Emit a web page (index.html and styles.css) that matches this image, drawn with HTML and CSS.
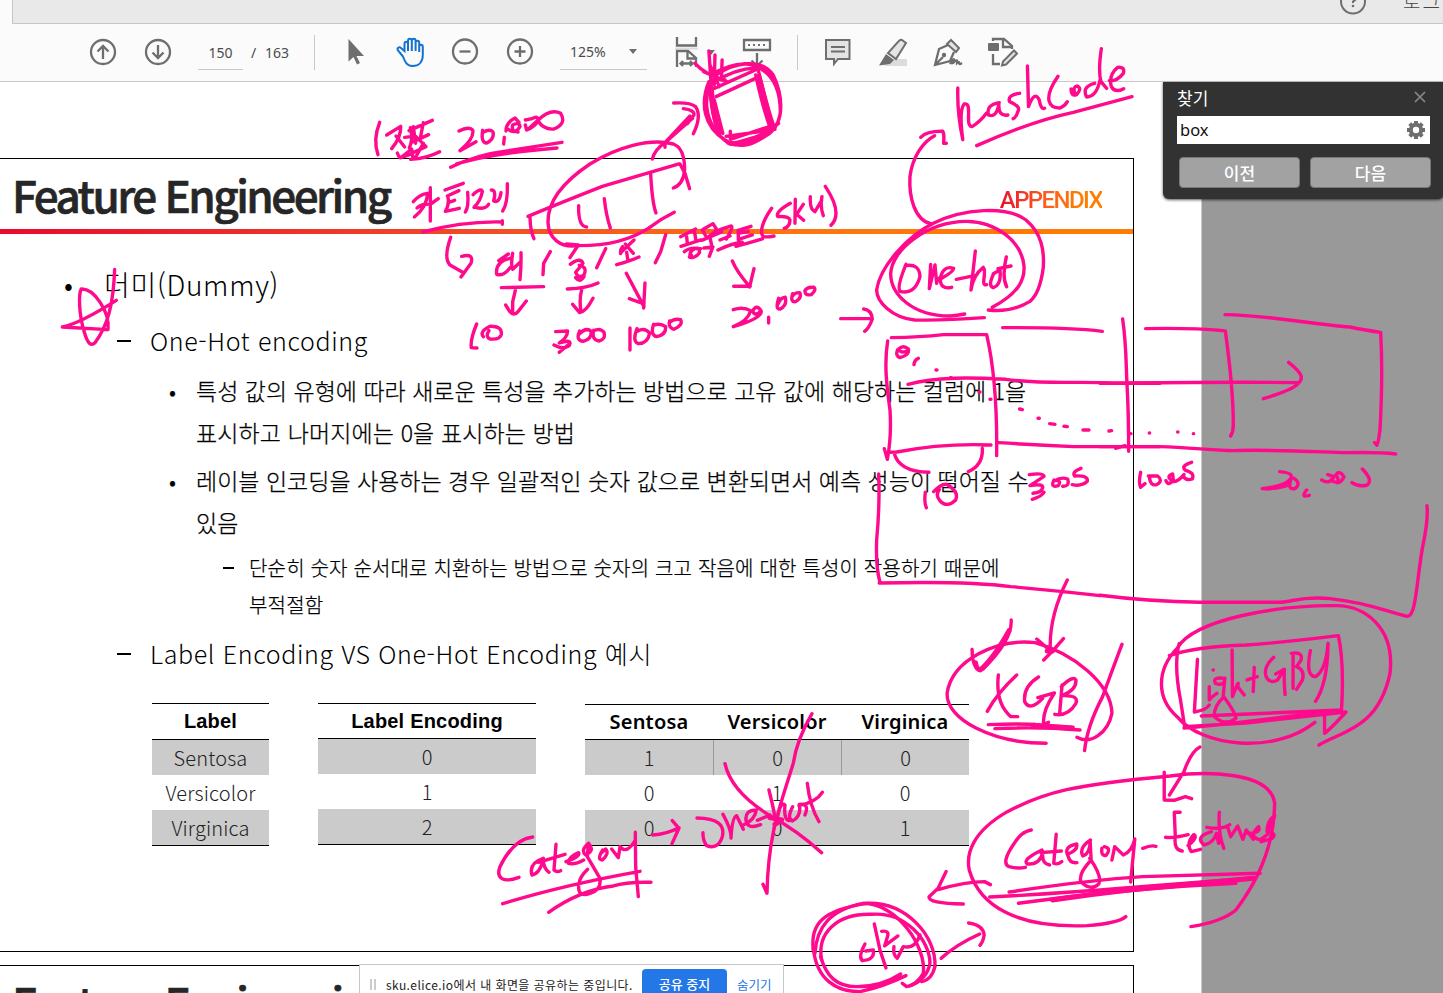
FILE: index.html
```html
<!DOCTYPE html>
<html lang="ko">
<head>
<meta charset="utf-8">
<title>Feature Engineering</title>
<link rel="stylesheet" href="styles.css">
</head>
<body>
<div class="app">
  <header class="tabs">
    <div class="tabband">
      <svg class="help" viewBox="1338 0 30 16"><circle cx="1353" cy="1.5" r="12"/><path d="M1349.5 -2q0-4 3.500-4t3.500 3.500q0 2-3.500 4v1.500"/><circle class="dot" cx="1353" cy="6" r="1.300"/></svg>
      <span class="login">로그인</span>
    </div>
  </header>
  <nav class="toolbar">
    <svg class="ic" viewBox="87 34 32 36"><circle cx="103" cy="52" r="12"/><path d="M103 59V46M97.500 51.500 103 46l5.500 5.500"/></svg>
    <svg class="ic" viewBox="142 34 32 36"><circle cx="158" cy="52" r="12"/><path d="M158 45v13M152.500 52.500 158 58l5.500-5.500"/></svg>
    <span class="field">150</span>
    <span class="slash">/</span>
    <span class="total">163</span>
    <i class="sep"></i>
    <svg class="ic" viewBox="340 34 32 36"><path class="fill" d="M348.500 39v22.500l5-4.500 3.500 7.500 3-1.500-3.500-7h7.500z"/></svg>
    <svg class="ic blue" viewBox="394 34 32 36"><path d="M403 56.500l-5-6c-1.500-2.500 1-4 3-2.500l3.500 3V44c0-3 3.500-3 3.500 0v7V41c0-3 3.800-3 3.800 0v10V41c0-3 3.800-3 3.800 0v10V43c0-3 3.600-3 3.600 0v9V47c0-3 3.600-3 3.600 0v8c0 7-4 11-10.300 11-5.500 0-7.500-4-9.500-9.500z"/></svg>
    <svg class="ic" viewBox="449 34 32 36"><circle cx="465" cy="51.500" r="12"/><path d="M459.500 51.500h11"/></svg>
    <svg class="ic" viewBox="504 34 32 36"><circle cx="520" cy="51.500" r="12"/><path d="M514.500 51.500h11M520 46v11"/></svg>
    <span class="field zoom">125%<b class="caret"></b></span>
    <svg class="ic wide" viewBox="670 34 48 36"><path class="band" d="M675 47.500h23v2h-23z"/><path d="M677 37v8.500h19V37M677 67V51h11l8 7v9M687.500 51v7.500h8M680.500 63.500h12M683 61l-2.500 2.500L683 66M690 61l2.500 2.500L690 66"/><path class="fill" d="M707 50h8l-4 5z"/></svg>
    <svg class="ic" viewBox="741 34 32 36"><path d="M744 40h26v10h-26zM757 53v13M751.500 60.500l5.500 5.500 5.500-5.500"/><path class="dots" d="M748 45h2M753 45h2M758 45h2M763 45h2"/></svg>
    <i class="sep"></i>
    <svg class="ic" viewBox="822 34 32 36"><path class="tint" d="M826 40h23.500v19H838l-4 5v-5h-8z"/><path class="thin" d="M831 47h14M831 51.500h14"/></svg>
    <svg class="ic" viewBox="877 34 32 36"><path class="band" d="M884 66l6-7h17v7z"/><path class="tint" d="M902 40l4 3-10 16-8-6 10-11q2-3 4-2z"/><path class="fill" d="M886 54l8 6-4 4-11 1.500z"/></svg>
    <svg class="ic" viewBox="932 34 32 36"><path class="tint" d="M951 40l8 8-3 4-9-8z"/><path d="M948 45l-9 4-4 16 15-4 4-9M935 65l8-8"/><circle class="fill" cx="944" cy="55" r="2.200"/><path d="M950 64q4-7 4-4t-1 3q4-4 4-2t0 2q2-2 2 0t3 0"/></svg>
    <svg class="ic last" viewBox="986 34 34 36"><rect class="fill" x="988" y="43" width="11" height="8" rx="1"/><path d="M993 41v-2h11l8 7v3M1003 39v8h8M993 54v10h7"/><path class="tint" d="M1014 50.500l3 3-11 11-4 1 1-4z"/></svg>
  </nav>

  <main class="viewer">
    <div class="sheet">
      <section class="page">
        <div class="titlebar"><h1>Feature Engineering</h1><span class="appendix">APPENDIX</span></div>
        <div class="rule"></div>
        <div class="content">
          <p class="l1"><i class="bul">•</i><span>더미(Dummy)</span></p>
          <p class="l2"><i class="dash"></i><span>One-Hot encoding</span></p>
          <p class="l3 first"><i class="bul">•</i><span>특성 값의 유형에 따라 새로운 특성을 추가하는 방법으로 고유 값에 해당하는 컬럼에 1을<br><span class="loose">표시하고 나머지에는 0을 표시하는 방법</span></span></p>
          <p class="l3"><i class="bul">•</i><span>레이블 인코딩을 사용하는 경우 일괄적인 숫자 값으로 변환되면서 예측 성능이 떨어질 수<br>있음</span></p>
          <p class="l4"><i class="dash"></i><span>단순히 숫자 순서대로 치환하는 방법으로 숫자의 크고 작음에 대한 특성이 작용하기 때문에<br>부적절함</span></p>
          <p class="l2 compare"><i class="dash"></i><span>Label Encoding VS One-Hot Encoding 예시</span></p>
          <div class="tables">
            <table class="t1"><tr><th>Label</th></tr><tr><td>Sentosa</td></tr><tr><td>Versicolor</td></tr><tr><td>Virginica</td></tr></table>
            <table class="t2"><tr><th>Label Encoding</th></tr><tr><td>0</td></tr><tr><td>1</td></tr><tr><td>2</td></tr></table>
            <table class="t3"><tr><th>Sentosa</th><th>Versicolor</th><th>Virginica</th></tr><tr class="split"><td>1</td><td>0</td><td>0</td></tr><tr><td>0</td><td>1</td><td>0</td></tr><tr><td>0</td><td>0</td><td>1</td></tr></table>
          </div>
        </div>
      </section>
      <section class="page next">
        <div class="titlebar"><h1>Feature Engineering</h1></div>
      </section>
    </div>
  </main>

  <aside class="find">
    <div class="findhead"><span>찾기</span><svg viewBox="0 0 12 12"><path d="M1 1l10 10M11 1 1 11"/></svg></div>
    <div class="findbox"><span>box</span><svg viewBox="-10 -10 20 20"><circle r="5.200"/><path d="M0-6V-9M0 6V9M-6 0H-9M6 0H9M-4.300-4.300l-2-2M4.300 4.300l2 2M-4.300 4.300l-2 2M4.300-4.300l2-2"/></svg></div>
    <div class="findbtns"><button>이전</button><button>다음</button></div>
  </aside>

  <div class="share"><i class="grip"></i><span class="msg">sku.elice.io에서 내 화면을 공유하는 중입니다.</span><button>공유 중지</button><a>숨기기</a></div>

  <svg class="ink" viewBox="0 0 1443 993" role="img" aria-label="1점포 20,000 카테고리 대/중/소/품목코드(SKU) hashCode one-hot XGB LightGBM category_features">
    <!-- store count -->
    <g transform="translate(370 90) scale(.3333)">
      <path d="M29 97Q8 150 24 194M50 135L92 109Q94 140 65 176M78 138L104 171M121 113Q130 150 118 174M104 142L122 140M82 189Q88 205 93 203L125 177 129 205M93 203L125 192M117 122L187 91M130 110L137 160M160 98L150 150M123 158L176 134M138 140L168 170 125 190M160 160L134 207M122 208Q170 205 209 185"/>
    </g>
    <!-- star -->
    <g transform="translate(0 240) scale(.3333)">
      <path d="M344 88C340 190 325 255 285 308Q267 325 254 280C235 220 236 160 244 147 C282 145 330 215 324 269L187 261Q240 250 349 181"/>
    </g>
    <!-- category levels -->
    <g transform="translate(400 90) scale(.3333)">
      <path d="M177 123Q205 108 218 120 224 145 180 182L228 155M248 121Q242 158 260 159 284 147 279 126 270 115 249 127M313 142L311 162M318 123Q318 98 345 84L357 97M325 118Q345 135 360 110 359 95 338 105 333 124 354 126M376 90L396 86Q415 75 414 92 405 110 380 120L376 105M385 117L412 92Q452 54 482 70 501 101 462 117 430 120 414 92"/>
      <path d="M152 232Q225 195 325 182L486 157M170 222Q270 190 471 174M250 197L400 174"/>
      <path d="M40 335Q60 312 83 310 81 350 43 381M51 354Q67 341 82 343M91 293V393M92 342L115 326M135 300L190 280M142 318L177 302M143 318Q150 340 136 364M144 338L164 331M136 364L178 355M203 307Q207 350 196 366M219 314Q244 291 247 305 241 335 222 352M226 352Q257 360 266 343M274 300Q290 300 281 333 298 340 303 308M322 281Q324 340 308 363M68 426Q190 393 307 396M307 392V403"/>
      <path d="M152 442C135 490 137 512 150 525L188 547M185 499Q223 489 213 520L183 561"/>
      <path d="M384 379Q460 347 607 289L837 222M840 222L855 250 869 296M390 382Q391 425 402 446M820 294Q850 283 854 240 854 174 820 162C750 143 650 172 570 222C472 287 443 344 444 397 446 445 480 474 533 467C640 468 700 444 745 415Q780 388 823 367M536 347C535 382 539 410 560 411M613 326Q618 375 631 414M752 251C755 310 761 350 768 369M757 207Q765 178 795 158L878 85M795 172V158L870 78M821 39Q870 36 887 50 906 80 880 131M850 56Q885 60 882 75L862 101"/>
      <path d="M330 505Q285 515 290 553 310 560 330 533M296 512L325 492M338 490Q332 526 338 538L362 515M363 488Q364 530 360 569M451 485L431 520 429 554M304 593L431 590M346 601L338 636V670M317 645L329 664Q342 680 354 665L379 633M499 462L535 465 510 503M511 523Q541 500 549 520 535 538 527 547 535 567 552 555 563 530 538 526M527 563Q540 580 552 560M502 597Q560 595 594 579M545 600Q537 628 543 665M518 643L539 668Q557 667 579 625M617 476L590 533M665 485L702 450M668 470Q660 480 662 491M676 462L700 490M680 487L684 512M650 524Q690 513 717 501M797 434L782 485 766 518M679 550Q700 590 732 650M735 579L731 654M688 626L732 642"/>
      <path d="M842 440L887 417M860 440L862 459M884 428L888 451M843 469Q875 459 903 450M853 485Q870 470 902 476M874 495Q860 505 881 502 908 490 894 475 874 475 870 493M910 418L939 401 951 420 921 444 907 420M905 451L965 426M930 442L937 475 928 499M912 474L939 471M960 419L994 408Q1001 412 979 447M960 450L990 438M954 480Q1000 459 1027 457M1014 421L1053 409M1015 422L1015 449M1018 429L1045 425M1016 448L1057 435M1008 469Q1052 458 1087 447M1115 355C1085 398 1078 430 1091 440Q1105 442 1122 438M1171 340Q1124 367 1134 380 1165 378 1170 390 1170 410 1153 415M1186 328L1185 400M1210 343L1190 373 1211 391M1231 320Q1229 359 1245 365L1265 331M1266 320Q1260 350 1270 377M1276 289C1310 340 1320 380 1293 406"/>
      <path d="M997 513Q1010 545 1046 586M1062 536L1049 591M1001 589H1051M1000 659Q1030 649 1052 662 1045 692 1000 710M1000 710Q1085 685 1084 664 1070 640 1058 663 1065 680 1080 665M1106 682V699M1136 625Q1125 659 1141 657 1162 645 1156 622 1141 623 1134 643M1178 611Q1170 638 1187 635 1207 622 1199 608 1184 607 1176 621M1216 600Q1212 618 1234 614 1250 600 1242 592 1220 590 1215 603"/>
      <path d="M230 702Q210 750 214 773L231 774M250 740Q237 725 270 709 307 708 304 733 300 750 270 747 255 740 267 722M467 725L503 723Q502 743 478 759 520 745 507 768 490 780 462 765M478 787L510 760M539 723Q526 752 550 754 575 748 574 724 557 710 535 735M581 721Q574 750 597 753 618 748 612 727 600 712 580 723M690 714V780M711 716Q696 755 715 761 743 760 749 730 735 711 712 724M761 703Q750 735 770 740 799 735 797 710 780 698 760 706M809 693Q804 713 822 718 850 705 842 689 822 684 808 698"/>
    </g>
    <!-- box with the heavy ring -->
    <g transform="translate(500 0) scale(.3571 .3333)">
      <path d="M546 190Q575 225 630 240M585 153L592 265M602 165L600 255M622 180L620 240M588 195L614 260M570 215L635 245M605 290L720 233M600 265L715 210M722 205Q750 330 770 388M716 225Q735 320 757 385M725 230L750 345M600 300L624 400M588 250Q590 350 615 400M645 394V418L765 376M633 409L760 390M655 430L750 400M735 403H750"/>
      <path d="M585 245C560 310 570 380 630 420C680 455 720 425 755 400C800 360 790 280 765 225C730 170 650 190 606 225C565 280 565 370 640 430Q690 445 720 418L780 370M590 225Q670 175 720 200C770 225 785 280 785 335M600 246Q660 206 715 204"/>
      <path class="heavy" d="M592 270Q597 350 612 392M725 230L757 365M645 430Q690 435 740 400"/>
    </g>
    <!-- hash code -->
    <g transform="translate(500 0) scale(.3571 .3333)">
      <path d="M1282 264Q1280 340 1296 419Q1285 330 1300 312C1325 305 1300 380 1322 380Q1345 365 1362 340M1398 308Q1360 315 1368 345 1390 355 1397 312 1395 350 1422 345M1455 280Q1420 285 1427 305 1460 320 1450 335 1445 353 1437 356M1477 198L1480 320Q1497 270 1510 300 1515 330 1525 325"/>
      <path d="M1208 672C1160 660 1145 590 1148 530 1155 470 1185 425 1217 407M1178 412Q1195 393 1240 394 1245 405 1242 430L1250 430"/>
    </g>
    <g transform="translate(1000 0) scale(.3333)">
      <path d="M174 229C125 300 150 325 180 324Q195 318 202 305M213 267Q213 290 230 284 247 266 232 258 218 260 224 278M284 250Q244 260 260 291 290 290 300 240M304 146Q294 215 303 245L320 265M328 242Q350 245 370 220 376 200 353 202 325 225 334 260 345 280 371 266M-70 437Q90 365 220 337L396 290"/>
    </g>
    <!-- one-hot bubble and column boxes -->
    <g transform="translate(820 220) scale(.3333)">
      <path d="M258 133Q230 200 240 214 285 225 300 170 299 130 256 137M332 133L328 206 345 135 350 190Q352 170 365 175 400 155 401 145 370 135 361 175 360 210 395 202M409 178L463 167M466 93L453 210Q460 165 490 142C502 155 480 200 500 194M521 161Q503 198 520 203 545 195 540 150L520 161M559 111Q545 170 560 200M534 146L573 138"/>
      <path d="M517 262C595 220 615 180 612 138 605 65 530 5 440 4C320 5 214 90 212 162C213 225 280 289 391 288Q410 287 434 282"/>
      <path d="M493 293Q370 302 284 300C215 293 170 245 170 210C180 140 260 50 340 10C430-35 560-43 618 0C665 40 673 90 670 142Q660 220 630 244 575 278 505 270"/>
      <path d="M62 296H154M131 267Q155 270 157 297 147 325 134 334M214 353Q300 352 370 344H500C520 430 532 540 530 707M203 363C192 430 200 500 210 570Q215 650 202 718L193 686M204 697L230 696Q370 669 513 675M536 668Q650 675 760 680H1020M222 697Q235 755 327 757M487 685Q490 735 445 755M548 323Q750 322 847 334M908 297C920 380 918 440 921 490 925 560 926 620 926 694M264 493C350 470 450 472 557 478 680 495 780 482 890 490H1020M233 389Q225 407 240 413 270 405 265 387 250 373 235 388 243 400 258 394M282 434Q283 420 295 415M887 685L915 677"/>
      <path d="M348 450h3M391 473h3M477 516h3M510 538h3M599 567l8 2M654 595h4M689 611l16 2M732 619l10 1M789 630l18 0M867 633l8-1M932 641h1M988 639h1M1073 636h1M1120 641h1"/>
      <path d="M176 762Q180 850 170 960C167 1040 175 1070 180 1087M316 817Q312 850 319 863M341 815Q365 790 380 793 418 815 407 840 382 865 360 843 345 825 358 809M628 764Q670 758 672 769L630 797Q670 790 668 803 665 818 639 820M637 838Q665 830 672 817M702 780Q690 805 715 797 726 780 704 782 724 770 743 777 750 800 728 799M783 745Q755 755 764 768 805 765 802 784 785 800 757 794M962 757Q955 790 962 802L975 791M988 768Q990 799 1010 794 1031 782 1013 768L985 768M1038 782Q1045 800 1060 780L1058 762Q1035 770 1060 785 1075 785 1092 764M1115 727Q1080 738 1097 751 1125 758 1117 777 1100 783 1090 770"/>
    </g>
    <g transform="translate(1100 290) scale(.3333)">
      <path d="M137 116Q270 113 370 122M376 123C388 210 400 330 400 405Q400 425 392 438M375 74C500 75 630 102 750 111Q790 120 842 127C848 230 844 350 840 420Q834 465 831 466L824 458M0 280C200 278 400 275 592 278M566 217C607 250 615 265 590 285 570 302 520 317 490 326M0 470H180C270 472 340 482 402 482 500 478 640 485 740 488Q840 486 887 492M539 545Q600 550 555 580 530 592 487 596 540 598 570 582M574 565Q560 600 585 596 605 580 582 565M620 600Q600 625 628 616M665 570Q690 585 702 560L683 554M692 570Q720 590 732 560 718 538 708 555 720 571 710 578M787 537Q820 570 802 585 775 592 756 578M981 647Q985 690 970 760C950 860 950 980 922 979 870 970 820 940 690 926 600 918 580 936 540 937H300Q150 935 0 916"/>
    </g>
    <!-- model names -->
    <g transform="translate(900 570) scale(.3463 .3333)">
      <path d="M-60 39Q200 33 320 50 450 62 578 77M483 30Q430 140 434 240M395 207L438 246M472 206Q445 240 415 270M321 150Q325 210 240 297 210 310 208 238M422 520C270 520 133 450 136 370 150 270 280 205 390 218 500 250 610 340 612 430 600 490 550 525 511 502M641 223Q620 280 585 380 540 470 533 542M284 315Q275 400 320 440H340M337 315Q280 370 252 424M400 321Q355 350 360 395 375 425 412 385M398 383L446 369Q410 425 415 463L429 457M468 345L461 430M466 350Q500 315 508 330 510 360 468 377 520 375 507 402 485 440 447 433M255 464Q360 460 400 465L500 472M274 476Q400 470 520 480"/>
      <path class="heavy" d="M218 278Q222 300 232 300 270 265 315 182M425 243H440M385 466L495 475"/>
      <path d="M1210 525C1270 485 1380 480 1415 310 1430 170 1340 108 1260 107 1100 105 850 145 800 235 740 300 740 385 800 440 870 530 1080 555 1198 457M778 257Q850 230 1000 225 1100 218 1266 197 1283 280 1275 420L870 438M806 221Q790 285 810 390L822 470 1000 459 1288 426Q1240 480 1226 490V430M820 474Q900 468 1275 420"/>
      <path d="M859 268L850 426Q885 420 893 405M904 300h1M893 350L893 390Q900 380 915 370M938 325Q900 320 911 340 937 350 938 325L933 383Q905 410 908 440 940 470 970 445 970 430 935 380M959 240L960 380Q982 320 975 350L994 375M1023 292L1020 365M1002 330L1032 320M1079 262C1035 300 1060 350 1090 330L1110 298 1085 312M1110 298Q1108 330 1112 374M1130 250Q1165 245 1158 270L1145 290Q1170 300 1162 330L1145 358M1135 250V355M1185 242Q1170 320 1200 320 1230 300 1236 220 1235 340 1200 394"/>
      <path d="M866 531Q840 545 820 605L778 675M763 607V690L792 691 824 680 842 686M840 1070Q930 1055 970 1020 1080 870 1082 700C1070 600 870 605 780 618 500 645 420 665 310 725 210 785 190 850 200 900 230 1010 340 1075 540 1067Q630 1060 652 1040M133 905L110 955 84 980Q80 1000 183 1002M110 959Q190 935 244 935L261 944M198 1059Q240 1065 243 1095 240 1115 231 1126M230 1092Q160 1125 119 1165"/>
      <path d="M379 780Q350 785 330 820 290 880 315 890 340 897 362 892M410 840Q350 870 368 882 405 885 413 845 407 880 432 885M451 793L444 880Q455 885 467 875M407 848L466 843M486 852Q515 840 510 822 470 830 486 860 490 880 511 878M550 810Q515 835 528 858 550 850 549 811L552 870Q515 910 522 935 550 965 574 942 585 920 548 865M583 835Q580 860 595 856 612 835 590 830M612 870L620 830 645 855Q670 845 678 807L666 936M701 835Q725 825 739 829"/>
      <path d="M809 727H792L795 800Q790 840 815 843M767 802Q790 805 832 794M832 827Q862 800 848 794 825 820 841 845L868 838M899 785Q850 800 878 825 905 820 914 790L920 820M922 727Q918 790 935 835M886 772Q930 780 952 764M945 768L955 800 975 768 990 808 1000 780 1020 808M1004 790Q1045 790 1035 770 1005 800 1040 810L1060 795 1082 737Q1060 750 1060 785 1090 790 1075 805L1043 815"/>
      <path d="M315 966Q550 930 700 920L1040 910M259 981Q470 970 640 955L1010 925M342 1000Q650 955 970 940"/>
      <path class="heavy" d="M440 990Q650 958 870 940L1020 925"/>
    </g>
    <!-- category arrow and lower notes -->
    <g transform="translate(480 690) scale(.3333)">
      <path d="M158 441Q100 448 60 530C47 565 70 580 117 562M190 505Q145 520 156 555 180 550 190 508 190 535 207 547M228 463L222 540Q230 548 242 542M175 517L255 493M258 515Q302 500 296 488 265 500 265 520 285 525 311 510M326 460Q300 480 317 495 347 480 325 460L322 500 360 565Q365 600 330 610 290 625 297 580 300 560 323 538M368 480Q350 510 367 510 389 490 377 477L365 488M395 477L415 503 420 470Q440 495 466 450L466 427 467 530 475 620M68 641Q250 585 480 544M206 667Q300 600 400 588 440 575 513 577M518 435Q560 432 597 413M577 392L597 415 576 461M651 384Q740 385 727 440 714 480 680 467 668 450 669 428M729 373Q755 420 753 444 757 380 770 377L790 418M790 405Q825 390 829 360 795 360 798 390 800 420 842 404M832 391L870 375M867 300Q880 350 889 402 900 330 915 345 910 400 935 390M938 350Q920 385 937 393 965 380 958 343 990 340 975 375M982 280Q990 350 1017 395M957 347Q1010 335 1027 307M735 221C750 290 810 340 870 377Q950 420 1025 488M996 71Q950 150 940 220C900 350 865 430 861 610L849 583"/>
      <path class="heavy" d="M870 383L905 390 885 403"/>
      <path d="M1000 780C990 700 1030 660 1160 640 1280 635 1370 740 1365 830Q1355 870 1325 875"/>
      <path d="M1005 790C1010 710 1050 660 1150 640 1250 640 1340 770 1330 850Q1310 885 1280 890L1267 880"/>
      <path d="M1025 810C1010 730 1070 670 1175 673 1275 665 1350 750 1350 820Q1340 870 1290 887"/>
      <path d="M1000 775C1010 870 1070 905 1140 905Q1210 890 1278 857M1022 800C1040 860 1070 890 1130 890Q1205 890 1262 852"/>
      <path d="M1155 762Q1134 800 1147 812 1185 810 1180 780L1157 783M1183 702L1200 780 1218 834M1205 724Q1230 720 1222 742L1214 768 1254 738M1242 770Q1238 795 1252 805L1270 770Q1305 778 1320 735"/>
    </g>
  </svg>
</div>
</body>
</html>
```
FILE: styles.css
```css
* { box-sizing: border-box; }
body { margin: 0; background: #fff; font-family: "Noto Sans CJK KR", "Noto Sans", sans-serif; }
p, h1 { margin: 0; font-weight: inherit; }
i { font-style: normal; }
.app { position: relative; width: 1443px; height: 993px; overflow: hidden; display: flex; flex-direction: column; }

.tabs { height: 24px; flex: none; padding-left: 12px; background: #fbfbfb; }
.tabband { height: 24px; background: #e9e9e9; border-left: 1px solid #c6c6c6; border-bottom: 1px solid #c6c6c6; display: flex; justify-content: flex-end; overflow: hidden; }
.help { width: 30px; height: 16px; margin-right: 35px; fill: none; stroke: #6e6e6e; stroke-width: 2; flex: none; }
.help .dot { fill: #6e6e6e; stroke: none; }
.login { width: 40px; height: 30px; margin-top: -12px; font-size: 19px; line-height: 26px; letter-spacing: 2px; color: #444; white-space: nowrap; overflow: hidden; font-weight: 300; }

.toolbar { height: 58px; flex: none; background: #fbfbfb; border-bottom: 1px solid #c9c9c9; padding: 10px 0 0 87px; display: grid; grid-template-columns: 55px 56px 45px 22px 49px 26px 54px 55px 55px 56px 110px 71px 56px 25px 55px 55px 54px 34px; align-items: start; color: #4b4b4b; font-family: "Noto Sans", sans-serif; }
.ic { width: 32px; height: 36px; fill: none; stroke: #6e6e6e; stroke-width: 2.3; }
.ic.wide { width: 48px; }
.ic.last { width: 34px; }
.ic .fill { fill: #6e6e6e; stroke: none; }
.ic .band { fill: #dcdcdc; stroke: none; }
.ic .tint { fill: #e4e4e4; stroke-width: 2; }
.ic .thin, .ic .dots { stroke-width: 1.8; }
.ic.blue { stroke: #1473d0; stroke-width: 2; }
.field { height: 36px; line-height: 38px; border-bottom: 1px solid #c9c9c9; text-align: center; font-size: 14px; }
.zoom { width: 87px; text-align: left; padding-left: 10px; display: flex; align-items: center; }
.caret { width: 0; border: 4.5px solid transparent; border-top: 5px solid #6e6e6e; border-bottom: 0; margin-left: 23px; }
.slash, .total { line-height: 38px; font-size: 14px; }
.slash { padding-left: 8px; }
.sep { width: 1px; height: 35px; background: #c9c9c9; margin-top: 1px; }

.viewer { flex: 1; min-height: 0; background: #999; }
.sheet { width: 1202px; height: 911px; background: #fff; border-right: 1px solid #ccc; padding-top: 76px; overflow: hidden; }
.page { width: 1134px; height: 794px; border: 1px solid #000; border-left: 0; }
.next { margin-top: 13px; }
.titlebar { height: 70px; padding: 0 31px 0 12px; display: flex; align-items: center; justify-content: space-between; }
h1 { font-size: 44px; line-height: 66px; font-weight: 500; letter-spacing: -2.5px; color: #262626; -webkit-text-stroke: .7px #262626; margin-top: -1px; white-space: nowrap; }
.appendix { font-family: Roboto, "Liberation Sans", sans-serif; font-weight: 500; font-size: 24px; letter-spacing: -1.6px; padding-top: 11px; color: transparent; background: linear-gradient(90deg, #e8112d, #fb5f20 45%, #ff7d00 80%); -webkit-background-clip: text; background-clip: text; }
.rule { height: 5px; background: linear-gradient(90deg, #ea0a2e, #f15025 45%, #ff7410 70%, #ff7d00); }

.content { color: #000; font-weight: 300; white-space: nowrap; }
.content p { display: flex; }
.dash { width: 14px; height: 2px; background: #000; flex: none; }
.l1 { font-size: 28px; line-height: 42px; padding: 29px 0 0 64px; letter-spacing: .7px; }
.l1 .bul { width: 40px; font-size: 28px; }
.l2 { font-size: 25px; line-height: 38px; padding: 16px 0 1px 117px; letter-spacing: .64px; }
.l2 .dash { margin: 19px 19px 0 0; }
.l3 { font-size: 23px; line-height: 42px; padding: 6px 0 0 169px; -webkit-text-stroke: .25px #000; }
.l3.first { padding-top: 9px; }
.l3 .bul { width: 27px; font-size: 22px; }
.loose { letter-spacing: .12px; }
.l4 { font-size: 20px; line-height: 37px; padding: 6px 0 0 223px; letter-spacing: .17px; -webkit-text-stroke: .25px #000; }
.l4 .dash { width: 11px; margin: 18px 15px 0 0; }
.compare { padding-top: 11px; }

.tables { display: flex; align-items: flex-start; padding: 30px 0 0 152px; }
table { border-collapse: separate; border-spacing: 0; border-top: 1px solid #000; border-bottom: 1px solid #000; table-layout: fixed; text-align: center; color: #222; }
th { height: 36px; padding: 0; border-bottom: 1px solid #000; font: bold 20px/35px "Liberation Sans", sans-serif; color: #000; letter-spacing: .2px; }
td { height: 35px; padding: 0; font-size: 20px; line-height: 34px; font-weight: 300; }
tr:nth-child(even) td { background: #cbcbcb; }
.t1 { width: 117px; margin-right: 49px; }
.t1 td { letter-spacing: .15px; }
.t2 { width: 218px; margin-right: 49px; }
.t2 th { height: 35px; line-height: 34px; }
.t3 { width: 384px; margin-top: 1px; }
.t3 th { height: 35px; font-family: "Noto Sans", sans-serif; font-weight: 600; line-height: 34px; }
.split td + td { border-left: 1px solid #999; }

.find { position: absolute; left: 1163px; top: 82px; width: 281px; height: 117px; padding: 2px 14px 0 14px; background: #323232; border-radius: 0 0 6px 6px; box-shadow: 0 1px 3px rgba(0,0,0,.65); color: #fff; }
.findhead { height: 32px; display: flex; justify-content: space-between; align-items: center; font-size: 17px; font-weight: 400; }
.findhead span { margin-top: -5px; }
.findhead svg { width: 12px; height: 12px; margin: -6px 4px 0 0; stroke: #888; stroke-width: 1.7; }
.findbox { width: 253px; height: 28px; padding: 0 4px 0 3px; background: #fff; color: #111; display: flex; justify-content: space-between; align-items: center; font: 16.5px "Noto Sans", sans-serif; }
.findbox span { margin-top: -2px; }
.findbox svg { width: 20px; height: 20px; fill: none; stroke: #6e6e6e; stroke-width: 4; }
.findbtns { display: flex; gap: 10px; padding: 13px 0 0 2px; }
.findbtns button { width: 121px; height: 31px; flex: none; border: 1px solid #777; border-radius: 4px; background: #a2a2a2; color: #fff; font: 500 17px/28px "Noto Sans CJK KR", sans-serif; padding: 0; }

.share { position: absolute; left: 359px; top: 964px; width: 425px; height: 42px; padding: 0 0 2px 10px; background: #fff; border: 1px solid #c6c6c6; display: flex; align-items: center; font-size: 12px; color: #222; white-space: nowrap; }
.grip { width: 6px; height: 11px; border: solid #ccc; border-width: 0 2px; margin-right: 10px; }
.msg { width: 256px; letter-spacing: .42px; }
.share button { width: 85px; height: 30px; border: 0; border-radius: 4px; background: #2377e6; color: #fff; font: 500 13px/26px "Noto Sans CJK KR", sans-serif; padding: 0; margin-right: 10px; }
.share a { color: #2377e6; font-size: 12.5px; }

.ink { position: absolute; left: 0; top: 0; width: 1443px; height: 993px; fill: none; stroke: #ff0a8c; stroke-linecap: round; stroke-linejoin: round; pointer-events: none; }
.ink path { stroke-width: 3.4px; vector-effect: non-scaling-stroke; }
.ink .heavy { stroke-width: 5px; }
```
